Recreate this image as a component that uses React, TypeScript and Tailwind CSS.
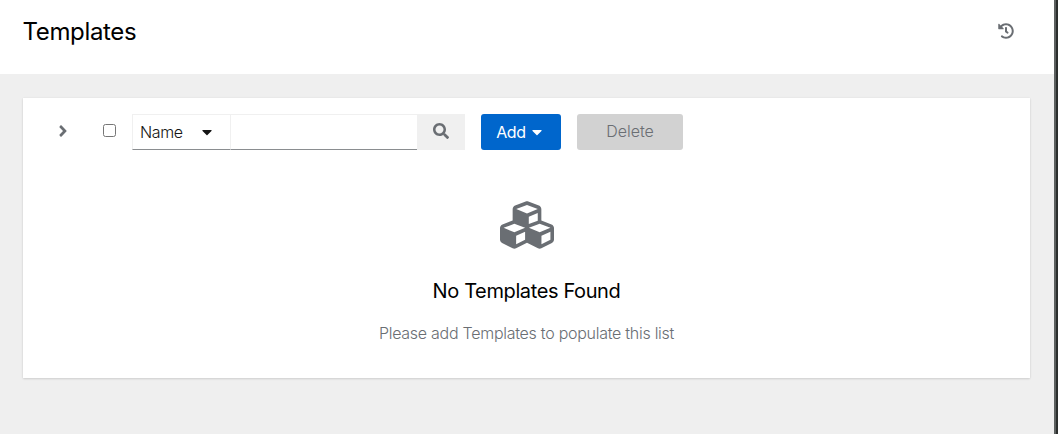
import React from "react";
import { FaAngleRight, FaCaretDown, FaCubes, FaHistory, FaSearch } from "react-icons/fa";

function Header() {
  return (
    <header className="flex h-[74px] shrink-0 items-start justify-between bg-white pt-[14px] pr-[40px] pl-[22.5px]">
      <h1 className="text-[24px] leading-9 tracking-[-0.35px] text-black">Templates</h1>
      <button type="button" aria-label="History" className="mt-[9px] text-[#6a6e73]">
        <FaHistory size={16} />
      </button>
    </header>
  );
}

function Toolbar() {
  return (
    <div className="flex h-9 items-center text-[16px] font-light text-[#151515]">
      <button type="button" aria-label="Expand" className="mb-[2px] ml-[32px] flex w-4 justify-center text-[#6a6e73]">
        <FaAngleRight size={18} />
      </button>
      <span className="mb-[3px] ml-[32px] size-[13px] rounded-[2.5px] border border-[#767676] bg-white" role="checkbox" aria-checked="false" />
      <div className="ml-[16px] flex h-9">
        <button type="button" className="flex w-[99px] items-center justify-between border border-[#f0f0f0] border-b-[#8a8d90] pr-[15px] pb-px pl-[7px]">
          <span className="tracking-[-0.35px]">Name</span>
          <FaCaretDown size={16} />
        </button>
        <div className="w-[186px] border-t border-b border-t-[#f0f0f0] border-b-[#8a8d90]" />
        <button type="button" aria-label="Search" className="flex w-12 items-center justify-center bg-[#f0f0f0] pb-[2px] text-[#6a6e73]">
          <FaSearch size={16} />
        </button>
      </div>
      <button type="button" className="ml-4 flex h-9 w-20 items-center rounded-[3px] bg-[#0066cc] pb-px pl-[15px] text-white">
        <span className="w-[30px] font-normal tracking-[-0.3px]">Add</span>
        <FaCaretDown size={16} className="ml-[3px]" />
      </button>
      <button type="button" className="ml-4 h-9 w-[106px] rounded-[3px] bg-[#d2d2d2] pb-[2px] text-[#6a6e73]">
        Delete
      </button>
    </div>
  );
}

function EmptyState() {
  return (
    <div className="flex flex-col items-center pt-12">
      <FaCubes size={54} className="text-[#6a6e73]" />
      <h2 className="mt-[24px] text-[20px] leading-[30px] tracking-[-0.38px] whitespace-nowrap text-black">No Templates Found</h2>
      <p className="mt-[15px] text-[16px] leading-6 font-light tracking-[-0.27px] whitespace-nowrap text-[#6a6e73]">
        Please add Templates to populate this list
      </p>
    </div>
  );
}

export default function App() {
  return (
    <div className="flex h-[434px] w-[1058px] overflow-hidden bg-[#efefef] font-['Inter',sans-serif]">
      <div className="flex min-w-0 flex-1 flex-col">
        <Header />
        <main className="pt-6 pr-[24px] pl-[23px]">
          <section className="h-[280px] bg-white pt-4 shadow-[0_1px_2px_0_rgba(3,3,3,0.12),0_0_2px_0_rgba(3,3,3,0.06)]">
            <Toolbar />
            <EmptyState />
          </section>
        </main>
      </div>
      <div className="w-1 shrink-0 border-l-2 border-[#5c605f] bg-[#2b2e2d]" />
    </div>
  );
}
